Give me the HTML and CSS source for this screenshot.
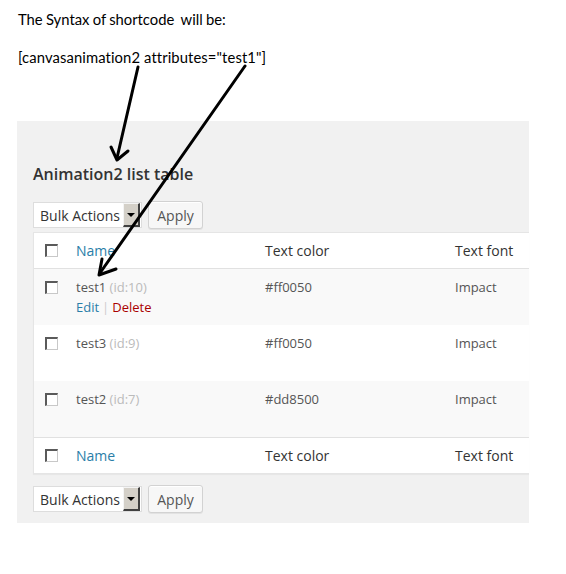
FILE: index.html
```html
<!DOCTYPE html>
<html>
<head>
<meta charset="utf-8">
<link rel="stylesheet" href="styles.css">
</head>
<body>
<div class="intro">
  <p class="line first">The Syntax of shortcode&nbsp; will be:</p>
  <p class="line second">[canvasanimation2 attributes="test1"]</p>
</div>

<div class="panel">
  <h2 class="title">Animation2 list table</h2>

  <div class="actions">
    <div class="select"><span class="select-label">Bulk Actions</span><span class="select-btn"><span class="tri"></span></span></div>
    <button class="apply">Apply</button>
  </div>

  <div class="list">
    <div class="row head">
      <div class="cb-cell"><span class="cb"></span></div>
      <div class="cell link">Name</div>
      <div class="cell">Text color</div>
      <div class="cell">Text font</div>
    </div>
    <div class="row item alt">
      <div class="cb-cell"><span class="cb"></span></div>
      <div class="cell name"><span class="nm">test1</span> <span class="id">(id:10)</span>
        <div class="row-actions"><span class="edit">Edit</span><span class="sep">|</span><span class="del">Delete</span></div>
      </div>
      <div class="cell val">#ff0050</div>
      <div class="cell val">Impact</div>
    </div>
    <div class="row item">
      <div class="cb-cell"><span class="cb"></span></div>
      <div class="cell name"><span class="nm">test3</span> <span class="id">(id:9)</span></div>
      <div class="cell val">#ff0050</div>
      <div class="cell val">Impact</div>
    </div>
    <div class="row item alt">
      <div class="cb-cell"><span class="cb"></span></div>
      <div class="cell name"><span class="nm">test2</span> <span class="id">(id:7)</span></div>
      <div class="cell val">#dd8500</div>
      <div class="cell val">Impact</div>
    </div>
    <div class="row foot">
      <div class="cb-cell"><span class="cb"></span></div>
      <div class="cell link">Name</div>
      <div class="cell">Text color</div>
      <div class="cell">Text font</div>
    </div>
  </div>

  <div class="actions bottom">
    <div class="select"><span class="select-label">Bulk Actions</span><span class="select-btn"><span class="tri"></span></span></div>
    <button class="apply">Apply</button>
  </div>
</div>

<svg class="arrows" width="566" height="574" viewBox="0 0 566 574">
  <g fill="none" stroke="#000" stroke-width="3" stroke-linecap="round" stroke-linejoin="round">
    <line x1="138" y1="67" x2="117" y2="158"/>
    <polyline points="111,147 117,160 128,151"/>
    <line x1="245" y1="66" x2="100" y2="273"/>
    <polyline points="102,259 99,275 116,269"/>
  </g>
</svg>
</body>
</html>
```

FILE: styles.css
```css
html, body {
  margin: 0;
  padding: 0;
  background: #fff;
}
body {
  width: 566px;
  height: 574px;
  position: relative;
  overflow: hidden;
  font-family: "Open Sans", "Noto Sans", sans-serif;
}
.intro {
  padding: 10px 0 0 18px;
  font-family: Lato, "Liberation Sans", sans-serif;
  font-size: 14.8px;
  color: #000;
}
.line {
  margin: 0;
  line-height: 18px;
}
.first {
  word-spacing: -0.5px;
}
.second {
  margin-top: 20px;
  letter-spacing: 0.1px;
}
.panel {
  margin: 55px 0 0 17px;
  width: 512px;
  height: 402px;
  box-sizing: border-box;
  background: #f1f1f1;
  padding: 43px 0 0 16px;
}
.title {
  margin: 0;
  font-size: 16px;
  line-height: 20px;
  font-weight: 600;
  color: #333;
}
.actions {
  margin-top: 17px;
  display: flex;
  align-items: center;
  gap: 6px;
  height: 28px;
}
.actions.bottom {
  margin-top: 11px;
}
.select {
  width: 109px;
  height: 26px;
  box-sizing: border-box;
  background: #fff;
  border: 1px solid #ddd;
  display: flex;
  align-items: center;
  justify-content: space-between;
  padding: 0 1px 0 6px;
}
.select-label {
  font-size: 14px;
  color: #333;
}
.select-btn {
  width: 17px;
  height: 24px;
  box-sizing: border-box;
  background: #d4d0c8;
  border-style: solid;
  border-width: 1px 2px 2px 1px;
  border-color: #f4f4f4 #404040 #404040 #f4f4f4;
  display: flex;
  align-items: center;
  justify-content: center;
}
.tri {
  width: 0;
  height: 0;
  border-left: 4px solid transparent;
  border-right: 4px solid transparent;
  border-top: 4px solid #000;
}
.apply {
  height: 28px;
  width: 55px;
  box-sizing: border-box;
  border: 1px solid #d2d2d2;
  border-radius: 3px;
  background: #f7f7f7;
  box-shadow: inset 0 1px 0 #fff, 0 1px 0 rgba(0,0,0,0.06);
  font-family: "Open Sans", "Noto Sans", sans-serif;
  font-size: 14px;
  color: #555;
  padding: 0;
}
.list {
  margin-top: 3px;
  background: #fff;
  border: 1px solid #e5e5e5;
  border-right: 0;
  box-shadow: 0 1px 1px rgba(0,0,0,0.04);
}
.row {
  display: grid;
  grid-template-columns: 42px 189px 190px 1fr;
  font-size: 14px;
  color: #333;
}
.row.head {
  height: 35px;
  border-bottom: 1px solid #e1e1e1;
  align-items: center;
}
.row.foot {
  height: 35px;
  border-top: 1px solid #e1e1e1;
  align-items: center;
}
.row.item {
  height: 56px;
  align-items: start;
  padding-top: 8px;
  box-sizing: border-box;
  font-size: 13px;
}
.row.alt {
  background: #f9f9f9;
}
.cb-cell {
  padding-left: 11px;
  display: flex;
  align-items: center;
}
.item .cb-cell {
  padding-top: 4px;
}
.cb {
  display: block;
  width: 13px;
  height: 13px;
  box-sizing: border-box;
  border-style: solid;
  border-width: 2px 1px 1px 2px;
  border-color: #5a5a5a #c8c8c8 #c8c8c8 #5a5a5a;
  background: #fff;
}
.cell {
  line-height: 20px;
}
.link {
  color: #2a7ea8;
}
.nm {
  color: #555;
}
.id {
  color: #bbb;
}
.val {
  color: #555;
}
.row-actions {
  font-size: 13px;
  line-height: 21px;
}
.edit {
  color: #2a7ea8;
}
.sep {
  color: #ccc;
  margin: 0 3px;
}
.del {
  color: #a00;
}
.arrows {
  position: absolute;
  left: 0;
  top: 0;
  pointer-events: none;
}
```
